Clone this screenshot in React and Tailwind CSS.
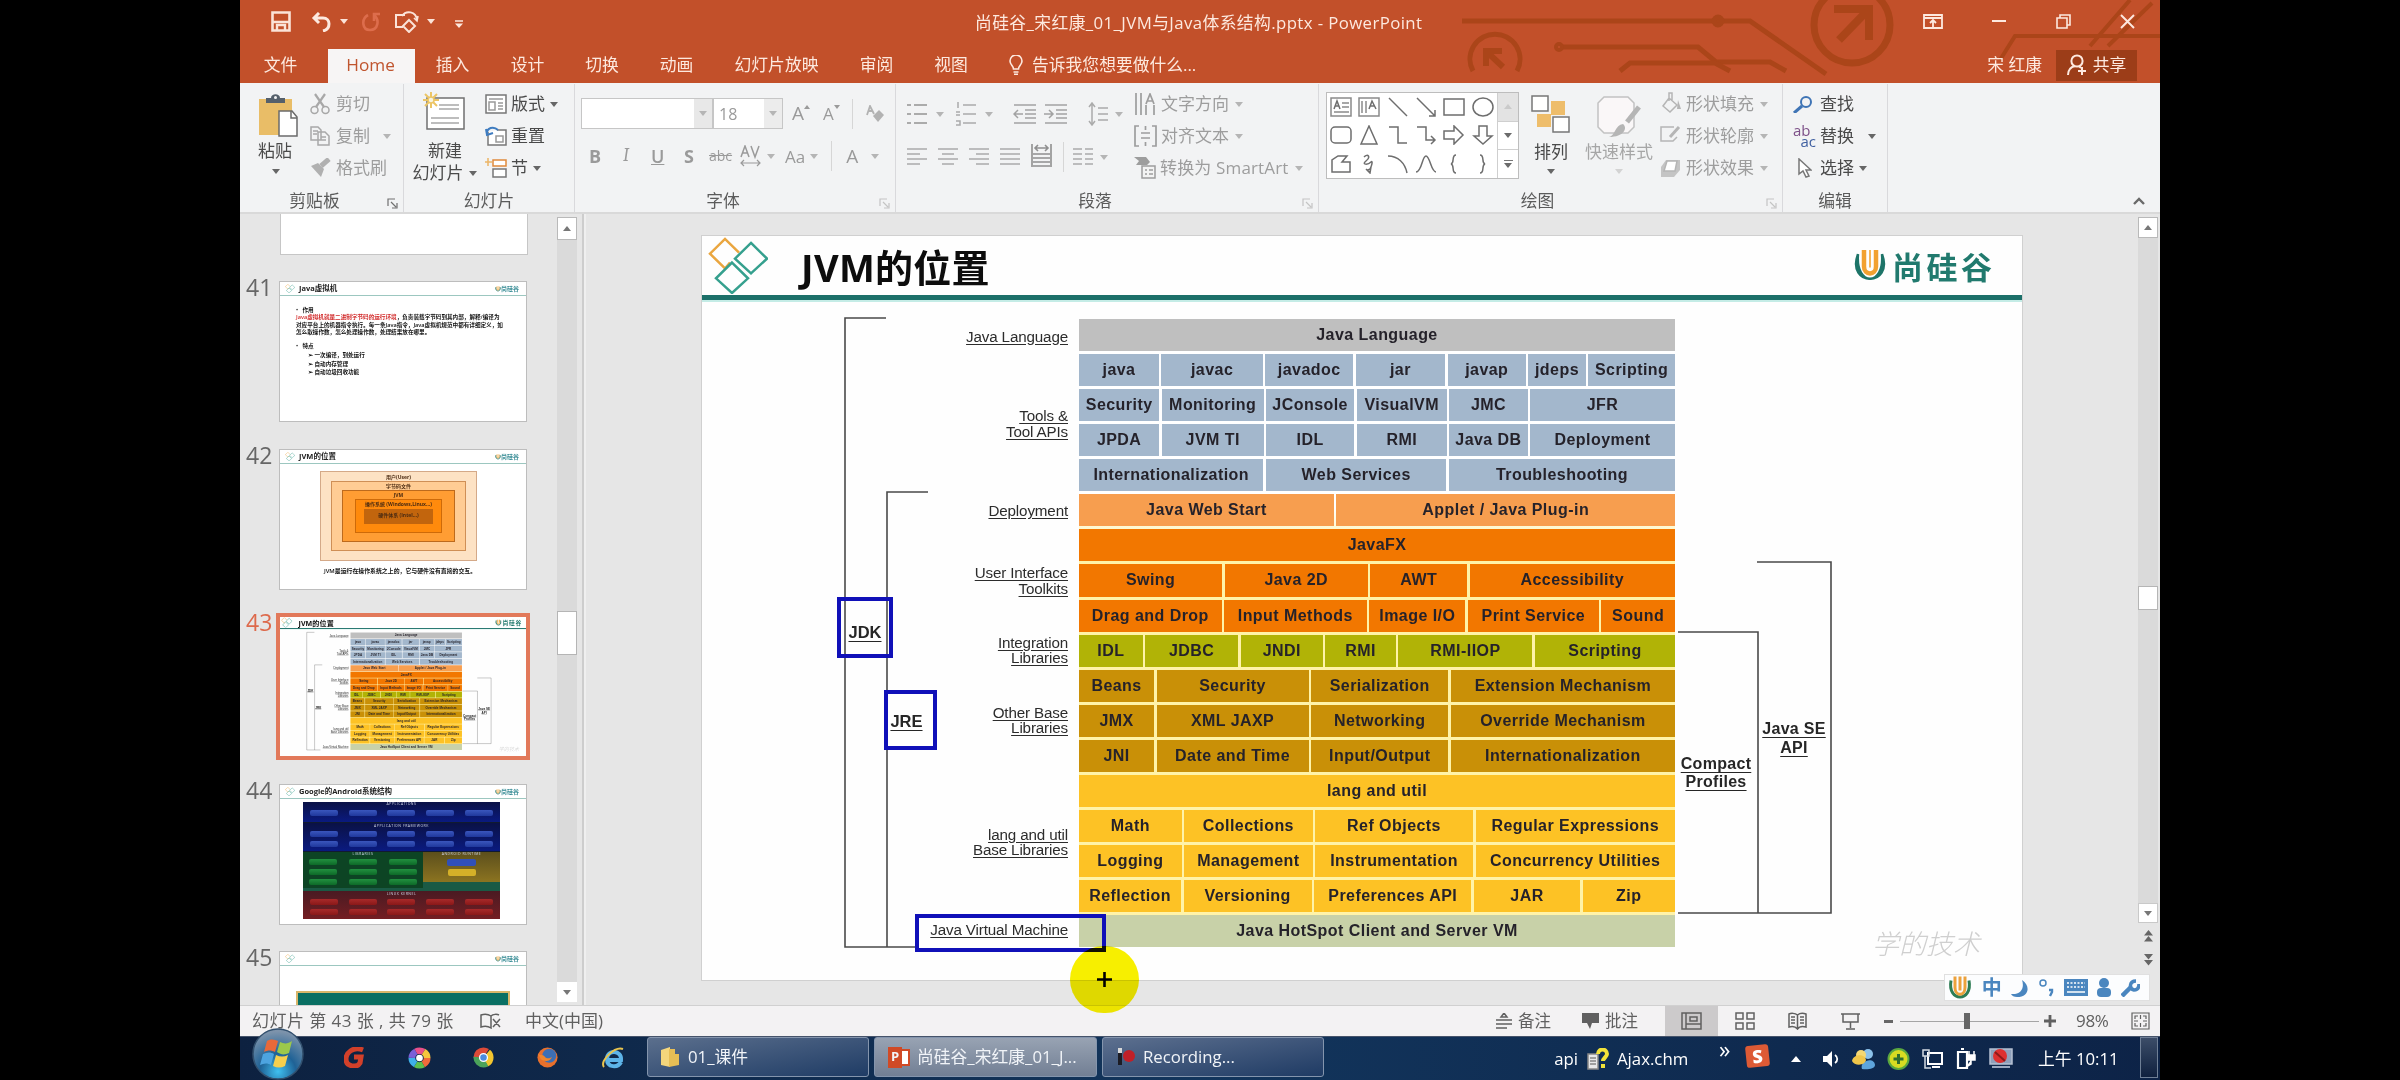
import React from "react";

/* ---------- shared bits ---------- */

function Caret({ className = "text-[#6b6b6b]" }) {
  return (
    <svg viewBox="0 0 8 5" className={"h-[5px] w-[8px] shrink-0 " + className}>
      <path d="M0 0h8L4 5z" fill="currentColor" />
    </svg>
  );
}

function Svg({ w, h, box, className = "", children }) {
  return (
    <svg
      width={w}
      height={h}
      viewBox={box || `0 0 ${w} ${h}`}
      preserveAspectRatio="none"
      fill="none"
      stroke="currentColor"
      strokeWidth="1.5"
      className={"shrink-0 " + className}
    >
      {children}
    </svg>
  );
}

function Launcher({ className = "text-[#777]" }) {
  return (
    <Svg w={11} h={11} className={className}>
      <path d="M1 8V1h7M4 4l5 5M10 5v5H5" strokeWidth="1.2" />
    </Svg>
  );
}

/* ---------- title bar ---------- */

function Circuit() {
  return (
    <svg viewBox="0 0 720 83" className="absolute right-0 top-0 h-[83px] w-[720px]" fill="none" stroke="#ab4519" strokeWidth="5">
      <path d="M22 21H310L386 74" />
      <circle cx="278" cy="21" r="4" />
      <path d="M122 47H258L276 62H330L346 71" />
      <circle cx="119" cy="47" r="3" strokeWidth="4" />
      <path d="M180 71L190 63H275L290 71" />
      <path d="M33 71A25 25 0 1 1 77 71" />
      <path d="M46 66V51H62M47 52L63 67" strokeWidth="6" />
      <circle cx="412" cy="25" r="38" strokeWidth="7" />
      <path d="M394 9H429V40M428 10L399 40" strokeWidth="8" />
      <path d="M560 60L575 36H720M650 46L690 0M668 46L712 3" strokeWidth="4" />
    </svg>
  );
}

function TitleBar() {
  return (
    <div className="relative flex h-[49px] items-start text-[#fde9df]">
      <div className="flex h-[43px] w-[735px] items-center pl-[31px]">
        <Svg w={20} h={21} className="text-[#fbe3d8]">
          <path d="M1.5 1.5h17v18h-17z M2 11h16" strokeWidth="2.6" />
          <path d="M6 20v-6h8v6" strokeWidth="2.4" />
        </Svg>
        <Svg w={21} h={20} className="ml-[20px] text-[#fde9df]">
          <path d="M8 1L3 6l5 5M3 6h9c8 0 8 11 0 13" strokeWidth="3" />
        </Svg>
        <Caret className="ml-[8px] text-[#fbe3d8]" />
        <Svg w={19} h={20} className="ml-[13px] text-[#dd6d4c]">
          <path d="M7 3C0 7 1 18 9 18s10-10 4-15M13 9V2h6" strokeWidth="2.6" />
        </Svg>
        <Svg w={25} h={22} className="ml-[14px] text-[#fbe3d8]">
          <path d="M9 16H2V4h9M8 5c4-6 14-5 15 4M15 9l6 6-6 6-6-6z" strokeWidth="2" />
          <path d="M20 7l3 3 1-5" strokeWidth="1.6" />
        </Svg>
        <Caret className="ml-[8px] text-[#fbe3d8]" />
        <Svg w={8} h={8} className="ml-[20px] mt-[5px] text-[#fde9df]">
          <path d="M0 1h8" />
          <path d="M0 3.5h8L4 8z" fill="currentColor" stroke="none" />
        </Svg>
      </div>
      <div className="whitespace-nowrap pt-[11px] text-[16.8px] leading-6 tracking-[0.4px]">
        尚硅谷_宋红康_01_JVM与Java体系结构.pptx - PowerPoint
      </div>
      <div className="ml-auto flex h-[42px] items-center pr-[25px]">
        <Svg w={20} h={15} className="mr-[49px]">
          <path d="M1 1h18v13H1zM1 4h18M10 13V7M7 9l3-3 3 3" strokeWidth="1.8" />
        </Svg>
        <Svg w={14} h={2} className="mr-[50px]">
          <path d="M0 1h14" strokeWidth="2" />
        </Svg>
        <Svg w={15} h={15} className="mr-[49px]">
          <path d="M1 4h10v10H1zM4 4V1h10v10h-3" strokeWidth="1.6" />
        </Svg>
        <Svg w={15} h={15}>
          <path d="M1 1l13 13M14 1L1 14" strokeWidth="1.9" />
        </Svg>
      </div>
    </div>
  );
}

function TabBar() {
  return (
    <div className="relative flex h-[34px] items-center pb-[2px] text-[16.8px] text-[#fde9df]">
      <div className="w-[88px] pr-[7px] text-center">文件</div>
      <div className="-mb-[2px] flex h-[34px] w-[87px] items-center justify-center bg-[#f7f5f5] pb-[2px] pr-[2px] text-[17.2px] text-[#c0552f]">Home</div>
      <div className="w-[75px] text-center">插入</div>
      <div className="w-[75px] text-center">设计</div>
      <div className="w-[74px] text-center">切换</div>
      <div className="w-[75px] text-center">动画</div>
      <div className="w-[125px] text-center">幻灯片放映</div>
      <div className="w-[75px] text-center">审阅</div>
      <div className="w-[74px] text-center">视图</div>
      <Svg w={14} h={20} className="ml-[21px] mr-[9px]">
        <path d="M4.5 14c0-3-3.5-4-3.5-8a6 6 0 0 1 12 0c0 4-3.5 5-3.5 8zM4.5 17h5M5 19.3h4" strokeWidth="1.6" />
      </Svg>
      <div>告诉我您想要做什么...</div>
      <div className="ml-auto mr-[14px]">宋 红康</div>
      <div className="mr-[23px] flex h-[31px] w-[81px] items-center justify-center gap-[6px] bg-[#9c3d18]">
        <Svg w={20} h={22}>
          <circle cx="10" cy="7" r="5.6" strokeWidth="2" />
          <path d="M1 21c0-5 3-8 7-9M12 12l2 2M15 13v8M11 17h8" strokeWidth="2" />
        </Svg>
        <span>共享</span>
      </div>
    </div>
  );
}

/* ---------- ribbon ---------- */

function Group({ className, label, launcher, children, labelClass = "" }) {
  return (
    <div className={"flex h-[128px] shrink-0 flex-col border-r border-[#d9d9dc] " + className}>
      <div className="flex h-[104px] shrink-0 items-start">{children}</div>
      <div className="flex h-[22px] shrink-0 items-center">
        <div className={"flex-1 text-center text-[16.8px] leading-5 text-[#5b5b5b] " + labelClass}>{label}</div>
        {launcher ? <Launcher className={launcher} /> : null}
      </div>
    </div>
  );
}

function SmallButton({ icon, text, caret, muted, gap = "gap-[5px]", caretGap = "ml-[8px]" }) {
  return (
    <div className={"flex h-8 items-center whitespace-nowrap text-[17px] " + (muted ? "text-[#9d9d9d]" : "text-[#4a4a4a]")}>
      <div className={"flex items-center " + gap}>
        {icon}
        <span>{text}</span>
      </div>
      {caret ? <Caret className={caretGap + (muted ? " text-[#b5b5b5]" : " text-[#666]")} /> : null}
    </div>
  );
}

const LAUNCH_DARK = "mr-[5px] mt-[4px] text-[#707070]";
const LAUNCH_LIGHT = "mr-[5px] mt-[4px] text-[#c4c4c4]";

function ClipboardGroup() {
  return (
    <Group className="w-[164px] pt-[2px]" label="剪贴板" launcher={LAUNCH_DARK} labelClass="pl-[2px]">
      <div className="ml-[17px] mt-[8px] flex w-[42px] flex-col items-center">
        <Svg w={40} h={43}>
          <path d="M1 5h33v36H1z" fill="#e9bd67" stroke="none" />
          <path d="M8 9V4h5c0-5 9-5 9 0h5v5z" fill="#55606b" stroke="none" />
          <circle cx="17.500" cy="3.500" r="1.500" fill="#f3f3f3" stroke="none" />
          <path d="M21 17h13l5 6v19H21z" fill="#fff" stroke="#6b6b6b" />
          <path d="M33 17v7h6" stroke="#6b6b6b" />
        </Svg>
        <div className="mt-[3px] whitespace-nowrap pr-[6px] text-[17px] leading-[22px] text-[#4a4a4a]">粘贴</div>
        <Caret className="mr-[4px] mt-[7px] text-[#666]" />
      </div>
      <div className="ml-[11px] mt-[2px]">
        <SmallButton muted gap="gap-[6px]" text="剪切" icon={
          <Svg w={20} h={22} className="text-[#a8a8a8]">
            <path d="M5 1l9 13M15 1L6 14" strokeWidth="2.2" />
            <circle cx="4.500" cy="17" r="3.500" /><circle cx="15.500" cy="17" r="3.500" />
          </Svg>} />
        <SmallButton muted caret caretGap="ml-[13px]" gap="gap-[6px]" text="复制" icon={
          <Svg w={20} h={20} className="text-[#a8a8a8]">
            <path d="M1 1h7l3 3v10H1zM8 6h7l4 4v9H8zM3 5h5M3 8h4M11 11h5M11 14h5" />
          </Svg>} />
        <SmallButton muted gap="gap-[5px]" text="格式刷" icon={
          <Svg w={21} h={20} className="text-[#b0b0b0]">
            <path d="M1 8l7-3 6 6-3 8z" fill="currentColor" stroke="none" />
            <path d="M11 8l8-7" strokeWidth="5" />
          </Svg>} />
      </div>
    </Group>
  );
}

function SlidesGroup() {
  return (
    <Group className="w-[171px] pt-[2px]" label="幻灯片">
      <div className="ml-[9px] mt-[6px] flex w-[58px] flex-col items-center">
        <Svg w={43} h={38} className="mr-[-4px]">
          <path d="M4 6h37v31H4z" fill="#fff" stroke="#707070" />
          <path d="M16 13h20M16 17h20M8 26h28M8 31h28" stroke="#a8a8a8" />
          <path d="M8 0v16M0 8h16M2 2l12 12M14 2L2 14" stroke="#ecc565" strokeWidth="2" />
          <circle cx="8" cy="8" r="3" fill="#f7f3e0" stroke="#ecc565" />
        </Svg>
        <div className="mt-[10px] pl-[6px] text-[17px] leading-[22px] text-[#4a4a4a]">新建</div>
        <div className="ml-[5px] flex items-center gap-[5px] whitespace-nowrap text-[17px] leading-[22px] text-[#4a4a4a]">
          幻灯片 <Caret className="text-[#666]" />
        </div>
      </div>
      <div className="ml-[14px] mt-[2px]">
        <SmallButton text="版式" caret gap="gap-[4px]" caretGap="ml-[5px]" icon={
          <Svg w={22} h={20} className="text-[#777]">
            <path d="M1 1h20v18H1z" fill="#fff" />
            <path d="M4 5h14M4 8h6v8H4zM13 9h5M13 12h5M13 15h5" stroke="#999" />
          </Svg>} />
        <SmallButton text="重置" gap="gap-[4px]" icon={
          <Svg w={22} h={20} className="text-[#777]">
            <path d="M3 6v13h18V4H12" fill="#fff" />
            <path d="M11 10h7v6h-7z" stroke="#999" />
            <path d="M2 9C1 1 9 0 13 4M1 3l1 6 6-2" stroke="#3f7cc0" strokeWidth="2" />
          </Svg>} />
        <SmallButton text="节" caret gap="gap-[4px]" caretGap="ml-[5px]" icon={
          <Svg w={22} h={20} className="text-[#777]">
            <path d="M8 2h13v6H8z" stroke="#e08a3c" fill="#fff" />
            <path d="M8 11h13v8H8z" fill="#fff" />
            <path d="M3 0v8M0 4h7" stroke="#ecb565" />
          </Svg>} />
      </div>
    </Group>
  );
}

function FontGroup() {
  return (
    <Group className="w-[321px] pt-[2px]" label="字体" launcher={LAUNCH_LIGHT} labelClass="pr-[8px]">
      <div className="ml-[6px] mt-[12px] text-[#9a9a9a]">
        <div className="flex h-[31px] items-center">
          <div className="flex h-[31px] w-[132px] border border-[#c6c6c6] bg-white">
            <div className="ml-auto flex w-[18px] items-center justify-center bg-[#e8e8e8]"><Caret className="text-[#b5b5b5]" /></div>
          </div>
          <div className="flex h-[31px] w-[70px] items-center border border-[#c6c6c6] bg-white pl-[5px] text-[16px]">
            18
            <div className="ml-auto flex h-full w-[18px] items-center justify-center bg-[#ececec]"><Caret className="text-[#b5b5b5]" /></div>
          </div>
          <div className="ml-[9px] flex items-start text-[19px] leading-none">A<Svg w={6} h={4} className="mt-[1px]"><path d="M0 4h6L3 0z" fill="currentColor" stroke="none" /></Svg></div>
          <div className="ml-[13px] flex items-start text-[17px] leading-none">A<Svg w={6} h={4}><path d="M0 0h6L3 4z" fill="currentColor" stroke="none" /></Svg></div>
          <div className="ml-[12px] h-[30px] w-px bg-[#d6d6d6]" />
          <Svg w={18} h={18} className="ml-[13px] text-[#b2b2b2]">
            <path d="M7 11l6-6 5 5-6 7z" fill="currentColor" stroke="none" />
            <path d="M1 10L4 1l4 8M2 6h5" strokeWidth="1.8" />
          </Svg>
        </div>
        <div className="mt-[12px] flex h-[30px] items-center pl-[8px] text-[18px] leading-none">
          <b className="w-[32px]">B</b>
          <i className="w-[30px] pl-[2px] font-serif">I</i>
          <span className="w-[33px] font-semibold underline">U</span>
          <b className="w-[25px]">S</b>
          <span className="w-[31px] text-[14px] line-through">abc</span>
          <Svg w={21} h={22}>
            <path d="M1 12L5 1l4 11M3 8h5M11 1l4 11 4-11" />
            <path d="M1 18h19M4 15l-3 3 3 3M17 15l3 3-3 3" strokeWidth="1.200" />
          </Svg>
          <Caret className="ml-[6px] text-[#b5b5b5]" />
          <span className="ml-[10px] text-[17px]">Aa</span>
          <Caret className="ml-[5px] text-[#b5b5b5]" />
          <div className="ml-[13px] h-[30px] w-px bg-[#d6d6d6]" />
          <span className="ml-[14px] text-[19px]">A</span>
          <Caret className="ml-[13px] text-[#b5b5b5]" />
        </div>
      </div>
    </Group>
  );
}

function Lines({ d, w = 20 }) {
  return (
    <Svg w={w} h={18} className="text-[#ababab]">
      <path d={d} strokeWidth="1.600" />
    </Svg>
  );
}

function ParagraphGroup() {
  return (
    <Group className="w-[423px] pt-[2px]" label="段落" launcher={LAUNCH_LIGHT} labelClass="pr-[8px]">
      <div className="mt-[12px] w-[227px] pl-[11px]">
        <div className="flex h-[32px] items-center">
          <Svg w={20} h={24} className="text-[#ababab]"><path d="M0 3h4M0 12h4M0 21h4M7 3h13M7 12h13M7 21h13" strokeWidth="2" /></Svg>
          <Caret className="ml-[9px] text-[#b5b5b5]" />
          <Svg w={20} h={24} className="ml-[12px] text-[#ababab]"><path d="M2 0v6M0 10h4M0 13h4M0 19h4v4H0M7 3h13M7 12h13M7 21h13" /></Svg>
          <Caret className="ml-[9px] text-[#b5b5b5]" />
          <div className="ml-[9px] h-[30px] w-px bg-[#d6d6d6]" />
          <Svg w={23} h={20} className="ml-[11px] text-[#a2a2a2]"><path d="M1 1h22M12 6h11M12 10h11M12 14h11M1 19h22M10 10H1M5 6l-4 4 4 4" /></Svg>
          <Svg w={23} h={20} className="ml-[8px] text-[#a2a2a2]"><path d="M1 1h22M12 6h11M12 10h11M12 14h11M1 19h22M0 10h9M5 6l4 4-4 4" /></Svg>
          <div className="ml-[9px] h-[30px] w-px bg-[#d6d6d6]" />
          <Svg w={20} h={24} className="ml-[12px] text-[#ababab]"><path d="M4 1v22M1 5l3-4 3 4M1 19l3 4 3-4M10 6h10M10 12h10M10 18h10" /></Svg>
          <Caret className="ml-[7px] text-[#b5b5b5]" />
        </div>
        <div className="mt-[12px] flex h-[30px] items-center gap-[11px]">
          <Lines d="M0 1h20M0 6h13M0 11h20M0 16h13" />
          <Lines d="M0 1h20M4 6h12M0 11h20M4 16h12" />
          <Lines d="M0 1h20M7 6h13M0 11h20M7 16h13" />
          <Lines d="M0 1h20M0 6h20M0 11h20M0 16h20" />
          <Svg w={21} h={23} className="mb-[3px] text-[#8f8f8f]"><path d="M1 0v23M20 0v23M4 4h13M7 1L4 4l3 3M14 1l3 3-3 3M2 10h17M2 14h17M2 18h17M2 22h17" strokeWidth="1.600" /></Svg>
          <div className="-mr-[2px] h-[30px] w-px bg-[#d6d6d6]" />
          <Lines d="M0 1h9M0 6h9M0 11h9M0 16h9M12 1h8M12 6h8M12 11h8M12 16h8" />
          <Caret className="-ml-[4px] text-[#b5b5b5]" />
        </div>
      </div>
      <div className="ml-[11px] mt-[2px]">
        <SmallButton muted caret gap="gap-[4px]" caretGap="ml-[6px]" text="文字方向" icon={<Svg w={23} h={22}><path d="M2 0v22M7 0v22M12 12v10M20 12v10M12 11l4-10 4 10M13 8h6" strokeWidth="1.700" /></Svg>} />
        <SmallButton muted caret gap="gap-[4px]" caretGap="ml-[6px]" text="对齐文本" icon={<Svg w={23} h={22}><path d="M5 1H1v20h4M18 1h4v20h-4M7 8h9M7 13h9M11.500 1v4M11.500 17v4" strokeWidth="1.700" /></Svg>} />
        <SmallButton muted caret gap="gap-[3px]" caretGap="ml-[6px]" text={<span className="tracking-[0.15px]">转换为 SmartArt</span>} icon={<Svg w={23} h={22}><path d="M0 0h12l4 5-3 3H2l3-4z" fill="currentColor" stroke="none" /><path d="M8 9h13v12H8zM11 13h2M15 13h4M11 17h2M15 17h4" fill="#f3f3f3" /></Svg>} />
      </div>
    </Group>
  );
}

const SHAPES = [
  <g key="a"><path d="M1 1h20v18H1zM12 6h7M12 10h7M4 15h15" stroke="#8a8a8a" /><path d="M4 12l3-8 3 8M5 9h4" /></g>,
  <g key="b"><path d="M1 1h20v18H1zM4 4v12M8 4v12" stroke="#8a8a8a" /><path d="M11 12l3-8 4 8M12 9h5" /></g>,
  <path key="c" d="M2 1l18 18" />,
  <path key="d" d="M2 1l18 18M20 13v6h-6" />,
  <path key="e" d="M1 2h20v16H1z" />,
  <ellipse key="f" cx="11" cy="10" rx="10" ry="9" />,
  <rect key="g" x="1" y="2" width="20" height="16" rx="4" />,
  <path key="h" d="M11 1l8 18H3z" />,
  <path key="i" d="M2 2h9v16h9" />,
  <path key="j" d="M2 2h9v13h9M16 11l4 4-4 4" />,
  <path key="k" d="M1 6h10V1l9 9-9 9v-5H1z" />,
  <path key="l" d="M7 1h8v10h5l-9 8-9-8h5z" />,
  <path key="m" d="M2 18V6l6-4h9l-5 6h8v10z" />,
  <path key="n" d="M6 3c4-4 7 0 2 4s2 4 5 1-1 11-3 7M8 15l4 4 1-6" />,
  <path key="o" d="M1 2c10 0 17 7 19 17" />,
  <path key="p" d="M1 18C7 18 7 2 11 2s5 16 10 16" />,
  <path key="q" d="M13 1c-5 0-1 8-5 9 4 1 0 9 5 9" />,
  <path key="r" d="M8 1c5 0 1 8 5 9-4 1 0 9-5 9" />,
];

function DrawingGroup() {
  return (
    <Group className="w-[464px] pt-[2px]" label="绘图" launcher={LAUNCH_LIGHT} labelClass="pr-[10px]">
      <div className="ml-[7px] mt-[6px] flex h-[87px] w-[193px] border border-[#bdbdbd] bg-white">
        <div className="grid w-[170px] grid-cols-6 grid-rows-3 place-items-center">
          {SHAPES.map((s, i) => (
            <Svg key={i} w={22} h={20} className="text-[#6e6e6e]">{s}</Svg>
          ))}
        </div>
        <div className="flex flex-1 flex-col border-l border-[#cfcfcf]">
          <div className="flex flex-1 items-center justify-center bg-[#e3e3e3]"><Caret className="rotate-180 text-[#cacaca]" /></div>
          <div className="flex flex-1 items-center justify-center border-y border-[#cfcfcf]"><Caret /></div>
          <div className="flex flex-1 flex-col items-center justify-center gap-[2px]"><div className="h-[1.500px] w-[9px] bg-[#777]" /><Caret /></div>
        </div>
      </div>
      <div className="ml-[9px] mt-[9px] flex w-[46px] flex-col items-center">
        <Svg w={40} h={38}>
          <path d="M20 6h14v14H20zM6 19h14v13H6z" fill="#eebd6b" stroke="none" />
          <path d="M1 1h16v15H1zM22 22h16v15H22z" fill="#fff" stroke="#777" />
        </Svg>
        <div className="mt-[8px] text-[17px] leading-[22px] text-[#4a4a4a]">排列</div>
        <Caret className="mt-[6px] text-[#666]" />
      </div>
      <div className="ml-[1px] mt-[10px] flex w-[88px] flex-col items-center">
        <Svg w={44} h={42} className="text-[#c2c2c2]">
          <path d="M7 1h24l6 6v24l-6 6H7l-6-6V7z" fill="#faf7f8" />
          <path d="M42 11L30 26" strokeWidth="5" stroke="#b5b5b5" />
          <path d="M12 41c6-1 6-12 14-13 5 4 1 13-14 13z" fill="#b5b5b5" stroke="none" />
        </Svg>
        <div className="mt-[3px] whitespace-nowrap text-[17px] leading-[22px] text-[#a6a6a6]">快速样式</div>
        <Caret className="mt-[6px] text-[#d3d3d3]" />
      </div>
      <div className="-ml-[3px] mt-[2px]">
        <SmallButton muted caret gap="gap-[4px]" caretGap="ml-[6px]" text="形状填充" icon={<Svg w={22} h={21} className="mb-[4px] text-[#b5b5b5]"><path d="M9 6l8 7-7 7-7-6zM9 9V1h3v7" /><path d="M18 8l3 9h-4z" fill="currentColor" stroke="none" /></Svg>} />
        <SmallButton muted caret gap="gap-[4px]" caretGap="ml-[6px]" text="形状轮廓" icon={<Svg w={22} h={18} className="mb-[6px] text-[#b5b5b5]"><path d="M14 3H1v14h12l4-4" /><path d="M19 3l-9 10" strokeWidth="3" /></Svg>} />
        <SmallButton muted caret gap="gap-[4px]" caretGap="ml-[6px]" text="形状效果" icon={<Svg w={22} h={19} className="text-[#b5b5b5]"><path d="M6 1h14v10l-6 7H1V8z" fill="#c4c4c4" stroke="none" /><path d="M7 2h10l-2 10H4z" fill="#fff" /></Svg>} />
      </div>
    </Group>
  );
}

function EditGroup() {
  return (
    <Group className="w-[105px] pt-[2px]" label="编辑">
      <div className="ml-[10px] mt-[2px]">
        <SmallButton gap="gap-[7px]" text="查找" icon={<Svg w={20} h={17} className="text-[#3f74b5]"><circle cx="13" cy="6" r="5" strokeWidth="2" /><path d="M9 10l-8 7" strokeWidth="3" /></Svg>} />
        <SmallButton gap="gap-[4px]" caret caretGap="ml-[14px]" text="替换" icon={
          <div className="flex w-[23px] flex-col text-[15px] leading-[11px]"><span className="h-[11px] text-[#7d5088]">ab</span><span className="h-[11px] text-right text-[#3f5fa0]">ac</span></div>} />
        <SmallButton gap="gap-[8px]" caret caretGap="ml-[5px]" text="选择" icon={<Svg w={14} h={20} className="ml-[5px] text-[#777]"><path d="M1 1v15l4-3 3 6 3-1-3-6h5z" fill="#fff" /></Svg>} />
      </div>
    </Group>
  );
}

function Ribbon() {
  return (
    <div className="relative flex h-[131px] border-b-[2px] border-[#d9d9d9] bg-[#f2f3f4] pt-[1px]">
      <ClipboardGroup />
      <SlidesGroup />
      <FontGroup />
      <ParagraphGroup />
      <DrawingGroup />
      <EditGroup />
      <Svg w={12} h={8} className="mb-[7px] ml-auto mr-[15px] self-end text-[#6a6a6a]">
        <path d="M1 7l5-5 5 5" strokeWidth="2.4" />
      </Svg>
    </div>
  );
}

/* ---------- slide content ---------- */

const BLUE = "bg-[#a3b7cc]";
const ORANGE = "bg-[#f27700]";
const OLIVE = "bg-[#b1b306]";
const BROWN = "bg-[#c99007]";
const GOLD = "bg-[#fdc225]";

/* each row: fill colour, then [label, right edge] pairs measured in slide units */
const ROWS = [
  ["bg-[#bfbfbf]", [["Java Language", 596]]],
  [BLUE, [["java", 82], ["javac", 186], ["javadoc", 276], ["jar", 368], ["javap", 448], ["jdeps", 507], ["Scripting", 596]]],
  [BLUE, [["Security", 82], ["Monitoring", 186], ["JConsole", 276], ["VisualVM", 368], ["JMC", 448], ["JFR", 596]]],
  [BLUE, [["JPDA", 82], ["JVM TI", 186], ["IDL", 276], ["RMI", 368], ["Java DB", 448], ["Deployment", 596]]],
  [BLUE, [["Internationalization", 186], ["Web Services", 368], ["Troubleshooting", 596]]],
  ["bg-[#f79e4f]", [["Java Web Start", 256], ["Applet / Java Plug-in", 596]]],
  [ORANGE, [["JavaFX", 596]]],
  [ORANGE, [["Swing", 145], ["Java 2D", 290], ["AWT", 388], ["Accessibility", 596]]],
  [ORANGE, [["Drag and Drop", 145], ["Input Methods", 290], ["Image I/O", 388], ["Print Service", 521], ["Sound", 596]]],
  [OLIVE, [["IDL", 65], ["JDBC", 160], ["JNDI", 244], ["RMI", 316], ["RMI-IIOP", 453], ["Scripting", 596]]],
  [BROWN, [["Beans", 76], ["Security", 230], ["Serialization", 369], ["Extension Mechanism", 596]]],
  [BROWN, [["JMX", 76], ["XML JAXP", 230], ["Networking", 369], ["Override Mechanism", 596]]],
  [BROWN, [["JNI", 76], ["Date and Time", 230], ["Input/Output", 369], ["Internationalization", 596]]],
  [GOLD, [["lang and util", 596]]],
  [GOLD, [["Math", 104], ["Collections", 234], ["Ref Objects", 394], ["Regular Expressions", 596]]],
  [GOLD, [["Logging", 104], ["Management", 234], ["Instrumentation", 394], ["Concurrency Utilities", 596]]],
  [GOLD, [["Reflection", 104], ["Versioning", 234], ["Preferences API", 394], ["JAR", 502], ["Zip", 596]]],
  ["bg-[#c8d1a8]", [["Java HotSpot Client and Server VM", 596]]],
];

function Diagram() {
  return (
    <div className="flex h-[628px] w-[596px] flex-col gap-[3px] bg-gradient-to-b from-white from-[30%] to-[#fff3a8] to-[36%] font-['Liberation_Sans',Arial,sans-serif]">
      {ROWS.map(([fill, cells], r) => (
        <div key={r} className="flex flex-1 gap-[2.500px]">
          {cells.map(([label, edge], i) => (
            <div
              key={i}
              style={{ flexGrow: edge - (i ? cells[i - 1][1] : 0), flexBasis: 0 }}
              className={"flex min-w-0 items-center justify-center whitespace-nowrap text-[16px] font-bold tracking-[0.45px] text-[#25222a] " + fill}
            >
              {label}
            </div>
          ))}
        </div>
      ))}
    </div>
  );
}

function RowLabels() {
  const cell = "flex flex-col items-end justify-center text-right leading-[15.5px] underline underline-offset-[2px]";
  return (
    <div className="grid h-[628px] w-[151px] grid-rows-18 font-['Liberation_Sans',Arial,sans-serif] text-[15.2px] tracking-[-0.15px] text-[#2c2c2c]">
      <div className={cell}>Java Language</div>
      <div className={"row-span-4 " + cell}><span>Tools &amp;</span><span>Tool APIs</span></div>
      <div className={cell}>Deployment</div>
      <div className={"row-span-3 " + cell}><span>User Interface</span><span>Toolkits</span></div>
      <div className={cell}><span>Integration</span><span>Libraries</span></div>
      <div className={"row-span-3 " + cell}><span>Other Base</span><span>Libraries</span></div>
      <div className={"row-span-4 " + cell}><span>lang and util</span><span>Base Libraries</span></div>
      <div className={cell}>Java Virtual Machine</div>
    </div>
  );
}

function Diamonds({ className = "" }) {
  return (
    <svg viewBox="0 0 60 58" preserveAspectRatio="none" fill="none" strokeWidth="2.500" className={className}>
      <path d="M31 16L17 2 2 17l15 15 5-6" stroke="#eaa63f" />
      <path d="M43 6l16 16-16 15-16-15z" stroke="#35a08e" />
      <path d="M24 26l16 16-16 15L8 42z" stroke="#35a08e" />
    </svg>
  );
}

function ULogo({ className = "" }) {
  return (
    <svg viewBox="0 0 36 36" preserveAspectRatio="none" fill="none" className={className}>
      <path d="M6 6C-6 38 42 38 30 6c3 32-27 32-24 0z" fill="#1d7468" stroke="#1d7468" strokeWidth="2.500" />
      <path d="M12 2v16c0 9 12 9 12 0V2" stroke="#f2a130" strokeWidth="4.500" />
      <path d="M18 2v17" stroke="#f6b75a" strokeWidth="2" />
    </svg>
  );
}

function SlideHeader({ title }) {
  return (
    <div className="flex h-[64px] w-[1320px] items-start border-b-[5px] border-[#1c7069] shadow-[0_2px_0_#c4ece6]">
      <Diamonds className="ml-[6px] mt-[1px] h-[57px] w-[60px]" />
      <div className="ml-[33px] mt-[8px] whitespace-nowrap text-[38px] font-bold leading-[46px] tracking-[0.3px] text-[#0d0d0d]">{title}</div>
      <div className="ml-auto mr-[26px] mt-[12px] flex items-center gap-[4px]">
        <ULogo className="h-[37px] w-[36px]" />
        <span className="w-[104px] whitespace-nowrap text-[31px] font-bold leading-[34px] tracking-[3.5px] text-[#217a6e]">尚硅谷</span>
      </div>
    </div>
  );
}

function Brackets() {
  return (
    <svg viewBox="0 0 1320 744" className="absolute left-0 top-0 h-[744px] w-[1320px]" fill="none" stroke="#4a4a4a" strokeWidth="1.600">
      <path d="M184 82H143V711H216" />
      <path d="M226 256H185V711" />
      <path d="M976 396H1056V677" />
      <path d="M1055 326H1129V677H976" />
    </svg>
  );
}

function Slide({ annotated }) {
  const tag = "absolute flex flex-col items-center text-center whitespace-nowrap font-['Liberation_Sans',Arial,sans-serif] font-bold text-[#262626] underline underline-offset-[3px] ";
  return (
    <div className="relative h-[744px] w-[1320px] bg-[#fefefe]">
      <SlideHeader title="JVM的位置" />
      <Brackets />
      <div className="ml-[215px] mt-[19px] flex gap-[11px]">
        <RowLabels />
        <Diagram />
      </div>
      <div className={tag + "left-[135px] top-[360px] h-[61px] w-[56px] justify-center pt-[11px] text-[16.500px]"}>JDK</div>
      <div className={tag + "left-[181px] top-[454px] h-[60px] w-[47px] justify-center pt-[2px] text-[16.500px]"}>JRE</div>
      <div className={tag + "left-[975px] top-[519px] w-[78px] text-[16px] leading-[18px] tracking-[0.3px]"}><span>Compact</span><span>Profiles</span></div>
      <div className={tag + "left-[1057px] top-[483px] w-[70px] text-[16px] leading-[19px] tracking-[0.3px]"}><span>Java SE</span><span>API</span></div>
      {annotated ? (
        <>
          <div className="absolute left-[135px] top-[361px] h-[61px] w-[56px] border-[4px] border-[#1010b8]" />
          <div className="absolute left-[182px] top-[454px] h-[60px] w-[53px] border-[4px] border-[#1010b8]" />
          <div className="absolute left-[213px] top-[678px] h-[38px] w-[191px] border-[4px] border-[#1010b8]" />
        </>
      ) : null}
      <div className="absolute left-[1170px] top-[690px] whitespace-nowrap text-[27px] font-light italic leading-[36px] text-[#cfcfcf]">学的技术</div>
    </div>
  );
}

/* ---------- thumbnails ---------- */

function ThumbHeader({ title }) {
  return (
    <div className="flex h-[14px] items-center border-b border-[#9cc7c0] px-[5px]">
      <Diamonds className="h-[9px] w-[10px]" />
      <div className="ml-[4px] whitespace-nowrap text-[7.500px] font-bold leading-none text-[#222]">{title}</div>
      <ULogo className="ml-auto h-[6px] w-[6px]" />
      <div className="mr-[2px] text-[6px] font-bold leading-none text-[#3c8f98]">尚硅谷</div>
    </div>
  );
}

function Thumb({ n, active, className = "", children }) {
  return (
    <div className={"flex items-start " + className}>
      <div className={"-mt-[6px] w-[39px] pl-[6px] text-[23px] leading-[24px] " + (active ? "text-[#dd6a4c]" : "text-[#666]")}>{n}</div>
      <div className={"h-[141px] w-[248px] overflow-hidden border bg-white " + (active ? "border-[#e2795a] outline outline-[3px] outline-[#e2795a]" : "border-[#bdbdbd]")}>
        {children}
      </div>
    </div>
  );
}

function JavaVmThumb() {
  return (
    <>
      <ThumbHeader title="Java虚拟机" />
      <div className="pl-[16px] pt-[11px] text-[5.600px] font-semibold leading-[7.300px] text-[#111]">
        <div>• &nbsp; 作用</div>
        <div className="w-[208px]">
          <span className="text-[#d22a2a]">Java虚拟机就是二进制字节码的运行环境</span>，负责装载字节码到其内部，解释/编译为对应平台上的机器指令执行。每一条Java指令，Java虚拟机规范中都有详细定义，如怎么取操作数，怎么处理操作数，处理结果放在哪里。
        </div>
        <div className="mt-[7px]">• &nbsp; 特点</div>
        <div className="pl-[12px] pt-[1px] leading-[8.200px]">
          <div>➢ 一次编译，到处运行</div>
          <div>➢ 自动内存管理</div>
          <div>➢ 自动垃圾回收功能</div>
        </div>
      </div>
    </>
  );
}

function NestedThumb() {
  return (
    <>
      <ThumbHeader title="JVM的位置" />
      <div className="ml-[40px] mt-[7px] h-[90px] w-[157px] border border-[#d4a988] bg-[#fde2c4] px-[10px] pt-[2px] text-center text-[5px] font-bold leading-[7px] text-[#4b2b12]">
        用户(User)
        <div className="h-[70px] border border-[#cf8f56] bg-[#ffcc94] px-[10px] pt-[1px]">
          字节码文件
          <div className="h-[52px] border border-[#bd6a1c] bg-[#ff9d33] px-[12px] pt-[1px]">
            JVM
            <div className="h-[34px] border border-[#ce6a08] bg-[#ff8a0c] px-[8px] pt-[1px]">
              操作系统 (Windows,Linux…)
              <div className="mt-[1px] h-[15px] bg-[#c2650d] pt-[3px]">硬件体系 (Intel…)</div>
            </div>
          </div>
        </div>
      </div>
      <div className="mt-[6px] pr-[6px] text-center text-[5.900px] font-semibold leading-[8px] text-[#111]">
        JVM是运行在操作系统之上的，它与硬件没有直接的交互。
      </div>
    </>
  );
}

function Pills({ count, fill, className = "" }) {
  return (
    <div className={"flex justify-around " + className}>
      {Array.from({ length: count }, (_, i) => (
        <div key={i} className={"h-[6px] w-[28px] rounded-[2px] bg-gradient-to-b " + fill} />
      ))}
    </div>
  );
}

const PILL_BLUE = "from-[#3a56bd] to-[#20389c]";
const PILL_GREEN = "from-[#229040] to-[#0d6a28]";
const PILL_RED = "from-[#a82a2a] to-[#8a1818]";

function AndroidThumb() {
  const head = "text-center text-[3.500px] leading-[4px] tracking-[0.500px] text-[#cdd3e6]";
  return (
    <>
      <ThumbHeader title="Google的Android系统结构" />
      <div className="ml-[23px] mt-[3px] h-[117px] w-[197px] bg-[#111b30]">
        <div className="h-[20px] bg-gradient-to-b from-[#0a1146] to-[#0a1a80] px-[2px]">
          <div className={head}>APPLICATIONS</div>
          <Pills count={5} fill={PILL_BLUE} className="mt-[4px]" />
        </div>
        <div className="mt-[1px] h-[28px] bg-gradient-to-b from-[#0a1146] to-[#0a1a80] px-[2px] pt-[1px]">
          <div className={head}>APPLICATION FRAMEWORK</div>
          <Pills count={5} fill={PILL_BLUE} className="mt-[3px]" />
          <Pills count={5} fill={PILL_BLUE} className="mt-[4px]" />
        </div>
        <div className="mt-[1px] flex h-[39px] bg-[#1a5a45]">
          <div className="h-[36px] w-[120px] bg-[#0d4424]">
            <div className={head}>LIBRARIES</div>
            <Pills count={3} fill={PILL_GREEN} className="mt-[3px]" />
            <Pills count={3} fill={PILL_GREEN} className="mt-[4px]" />
            <Pills count={3} fill={PILL_GREEN} className="mt-[4px]" />
          </div>
          <div className="flex h-[30px] flex-1 flex-col items-center bg-gradient-to-b from-[#5c4f1c] to-[#8c7420]">
            <div className={head}>ANDROID RUNTIME</div>
            <div className="mt-[3px] h-[7px] w-[29px] rounded-[2px] bg-[#3150b8]" />
            <div className="mt-[3px] h-[7px] w-[28px] rounded-[2px] bg-[#d5b028]" />
          </div>
        </div>
        <div className="h-[28px] bg-gradient-to-b from-[#4a1a22] to-[#741d22] px-[2px] pt-[1px]">
          <div className={head}>LINUX KERNEL</div>
          <Pills count={5} fill={PILL_RED} className="mt-[3px]" />
          <Pills count={5} fill={PILL_RED} className="mt-[4px]" />
        </div>
      </div>
    </>
  );
}

function ThumbPane() {
  return (
    <div className="flex h-[791px] w-[344px] shrink-0 border-r-2 border-[#cdcdcd]">
      <div className="h-full w-[317px] overflow-hidden">
        <div className="ml-[40px] h-[41px] w-[248px] border border-t-0 border-[#c6c6c6] bg-white" />
        <Thumb n="41" className="mt-[26px]"><JavaVmThumb /></Thumb>
        <Thumb n="42" className="mt-[27px]"><NestedThumb /></Thumb>
        <Thumb n="43" active className="mt-[26px]">
          <div className="h-[744px] w-[1320px] origin-top-left scale-[0.187]"><Slide /></div>
        </Thumb>
        <Thumb n="44" className="mt-[27px]"><AndroidThumb /></Thumb>
        <Thumb n="45" className="mt-[26px]">
          <ThumbHeader title="" />
          <div className="mx-[16px] mt-[25px] h-[80px] border-2 border-[#d9b66a] bg-[#0a6f63]" />
        </Thumb>
      </div>
      <div className="mt-[3px] flex h-[785px] w-[20px] flex-col bg-[#dadada]">
        <div className="flex h-[23px] items-center justify-center border border-[#b9b9b9] bg-white"><Caret className="rotate-180 text-[#777]" /></div>
        <div className="mt-[371px] h-[44px] border border-[#b5b5b5] bg-white" />
        <div className="mt-auto flex h-[20px] items-center justify-center bg-white"><Caret className="text-[#777]" /></div>
      </div>
    </div>
  );
}

/* ---------- editor ---------- */

function ImeBar() {
  return (
    <div className="absolute right-[10px] top-[760px] flex h-[27px] w-[206px] items-center justify-between border border-[#e0e0e0] bg-[#fcfdfe] pl-[3px] pr-[9px] text-[#4a86bf]">
      <svg viewBox="0 0 24 24" className="h-[25px] w-[24px]" fill="none">
        <path d="M3 5c-4 22 22 22 18 0" stroke="#2f7d55" strokeWidth="3" />
        <path d="M7 1v11c0 9 10 9 10 0V1M12 1v14" stroke="#eca23c" strokeWidth="3" />
      </svg>
      <span className="text-[20px] font-bold leading-none">中</span>
      <Svg w={18} h={18}><path d="M11 1c9 6 7 17-5 17-3 0-5-1-6-3 9 1 14-5 11-14z" fill="currentColor" stroke="none" /></Svg>
      <Svg w={15} h={18}><circle cx="4" cy="4" r="3" /><path d="M10 11h3v2l-2 4" strokeWidth="2.400" /></Svg>
      <Svg w={24} h={17}>
        <path d="M0 0h24v17H0z" fill="currentColor" stroke="none" />
        <path d="M3 4h18M3 8h18" stroke="#fff" strokeDasharray="2 1.500" />
        <path d="M3 13h18" stroke="#fff" />
      </Svg>
      <Svg w={14} h={19}><circle cx="7" cy="5" r="5" fill="currentColor" stroke="none" /><rect y="10" width="14" height="9" rx="4" fill="currentColor" stroke="none" /></Svg>
      <Svg w={19} h={18}><path d="M1 17l9-9" strokeWidth="4.500" /><path d="M15 2c-7 0-7 8-2 9 4 0 5-3 5-6" strokeWidth="3.500" /></Svg>
    </div>
  );
}

function Editor() {
  return (
    <div className="relative flex min-w-0 flex-1 border-l-2 border-[#efefef]">
      <div className="ml-[115px] mt-[21px] h-[746px] w-[1322px] shrink-0 border border-[#d0d0d0]">
        <Slide annotated />
      </div>
      <div className="ml-auto mr-[2px] mt-[3px] flex w-[20px] flex-col items-center">
        <div className="flex h-[706px] w-full flex-col bg-[#dadada]">
          <div className="flex h-[21px] items-center justify-center border border-[#b9b9b9] bg-white"><Caret className="rotate-180 text-[#777]" /></div>
          <div className="mt-[348px] h-[24px] border border-[#b5b5b5] bg-white" />
          <div className="mt-auto flex h-[20px] items-center justify-center border border-[#c9c9c9] bg-white"><Caret className="text-[#777]" /></div>
        </div>
        <Svg w={9} h={12} className="mt-[7px] text-[#666]"><path d="M0 5.500L4.500 0 9 5.500zM0 11.500L4.500 6 9 11.500z" fill="currentColor" stroke="none" /></Svg>
        <Svg w={9} h={12} className="mt-[12px] text-[#666]"><path d="M0 0h9L4.500 5.500zM0 6h9l-4.500 5.500z" fill="currentColor" stroke="none" /></Svg>
      </div>
      <ImeBar />
      <div className="absolute left-[484px] top-[732px] z-10 flex h-[67px] w-[69px] items-center justify-center rounded-full bg-[#f8f000] mix-blend-multiply">
        <Svg w={15} h={15} className="text-black"><path d="M7.500 0v15M0 7.500h15" strokeWidth="2.600" /></Svg>
      </div>
    </div>
  );
}

/* ---------- status bar ---------- */

function StatusBar() {
  return (
    <div className="flex h-[31px] items-center border-t border-[#d0d0d0] bg-[#f3f2f3] text-[16.5px] text-[#606060]">
      <div className="ml-[12px] w-[228px] whitespace-nowrap text-[17px] tracking-[0.45px]">幻灯片 第 43 张 , 共 79 张</div>
      <Svg w={21} h={16}><path d="M11 3C8 1 4 1 1 2v12c3-1 7-1 10 1zM11 3c2-2 6-2 8-1M13 6l7 8M20 6l-7 8" /></Svg>
      <div className="ml-[24px] text-[17px]">中文(中国)</div>
      <Svg w={16} h={16} className="ml-auto"><path d="M0 7h16M0 11h16M0 15h11M8 0l3 4H5z" /></Svg>
      <div className="ml-[6px] w-[34px] whitespace-nowrap">备注</div>
      <Svg w={17} h={16} className="ml-[30px]"><path d="M0 0h17v10H10l-2 6-3-6H0z" fill="currentColor" stroke="none" /></Svg>
      <div className="ml-[6px] w-[34px] whitespace-nowrap">批注</div>
      <div className="ml-[26px] flex h-full w-[53px] items-center justify-center bg-[#cccacb]">
        <Svg w={21} h={18}><path d="M1 1h19v16H1zM5 1v16M5 12h15M9 5h7v4H9z" /></Svg>
      </div>
      <Svg w={20} h={18} className="ml-[17px]"><path d="M1 1h7v6H1zM12 1h7v6h-7zM1 11h7v6H1zM12 11h7v6h-7z" /></Svg>
      <Svg w={19} h={18} className="ml-[33px]"><path d="M9.500 3C7 1 3 1 1 2v13c3-1 6-1 8.500 2 2-3 5-3 8.500-2V2c-3-1-6-1-8.500 1zV17M3 5h4M3 8h4M3 11h4M12 5h4M12 8h4M12 11h4" /></Svg>
      <Svg w={19} h={18} className="ml-[34px]"><path d="M0 2h19M2 2v8h15V2M9.500 10v6M5 17h9" /></Svg>
      <div className="ml-[24px] h-[3px] w-[9px] bg-[#666]" />
      <div className="ml-[7px] flex h-[16px] w-[139px] items-center">
        <div className="h-px w-[64px] bg-[#a5a5a5]" />
        <div className="h-[16px] w-[6px] bg-[#666]" />
        <div className="h-px flex-1 bg-[#a5a5a5]" />
      </div>
      <Svg w={12} h={12} className="ml-[5px]"><path d="M6 0v12M0 6h12" strokeWidth="2.800" /></Svg>
      <div className="ml-[20px] w-[38px] whitespace-nowrap text-[17px] tracking-[-0.3px]">98%</div>
      <Svg w={19} h={18} className="ml-[17px] mr-[10px]"><path d="M1 1h17v16H1zM9.500 3v4M9.500 11v4M3 9h4M12 9h4M4 7V4h3M12 4h3v3M4 11v3h3M12 14h3v-3" strokeWidth="1.200" /></Svg>
    </div>
  );
}

/* ---------- taskbar ---------- */

function StartOrb() {
  return (
    <svg viewBox="0 0 54 54" className="relative z-10 -mt-[10px] ml-[11px] h-[54px] w-[54px] shrink-0">
      <defs>
        <radialGradient id="orb" cx="50%" cy="85%" r="80%">
          <stop offset="0" stopColor="#3fc0f0" />
          <stop offset="0.450" stopColor="#1f6296" />
          <stop offset="1" stopColor="#7d93ab" />
        </radialGradient>
      </defs>
      <circle cx="27" cy="27" r="25" fill="url(#orb)" stroke="#32506e" strokeWidth="1.500" />
      <path d="M16 14c5-3 8-1 11 0l-3 11c-4-2-7-2-11 0z" fill="#e8693a" />
      <path d="M29 15c4 2 8 2 12-1l-3 12c-4 2-8 2-12-1z" fill="#9cc84b" />
      <path d="M12 27c4-2 8-2 11 0l-3 11c-3-2-7-2-11 0z" fill="#4da4e0" />
      <path d="M25 28c4 2 8 2 12 0l-3 11c-4 2-8 2-12 0z" fill="#f6cf4d" />
    </svg>
  );
}

function TaskButton({ className, icon, text }) {
  return (
    <div className={"flex h-[40px] items-center gap-[7px] overflow-hidden whitespace-nowrap rounded-[3px] border border-[#8495ad] text-[16.8px] text-[#f1f4f8] " + className}>
      {icon}
      <span>{text}</span>
    </div>
  );
}

function Taskbar() {
  return (
    <div className="flex h-[44px] items-start border-t border-[#45536a] bg-gradient-to-r from-[#0d2140] via-[#12355c] to-[#0d2347] text-white">
      <StartOrb />
      <div className="ml-[39px] flex h-[41px] items-center">
        <Svg w={21} h={21} className="mr-[43px]"><path d="M19 3C9-1 2 6 2 12c0 8 11 9 14 4l1-6h-7" stroke="#d2402a" strokeWidth="5" /></Svg>
        <Svg w={23} h={22} className="mr-[42px]" box="0 0 24 24">
          <circle cx="12" cy="12" r="8" stroke="#f06a3a" strokeWidth="7" strokeDasharray="8.400 42" />
          <circle cx="12" cy="12" r="8" stroke="#5fc04c" strokeWidth="7" strokeDasharray="8.400 42" strokeDashoffset="-8.400" />
          <circle cx="12" cy="12" r="8" stroke="#3fb0e8" strokeWidth="7" strokeDasharray="8.400 42" strokeDashoffset="-16.800" />
          <circle cx="12" cy="12" r="8" stroke="#7a5fd8" strokeWidth="7" strokeDasharray="8.400 42" strokeDashoffset="-25.200" />
          <circle cx="12" cy="12" r="8" stroke="#e8508a" strokeWidth="7" strokeDasharray="8.400 42" strokeDashoffset="-33.600" />
          <circle cx="12" cy="12" r="8" stroke="#f6c63c" strokeWidth="7" strokeDasharray="8.400 42" strokeDashoffset="-42" />
          <circle cx="12" cy="12" r="3.500" fill="#fff" stroke="none" />
        </Svg>
        <Svg w={21} h={21} className="mr-[43px]" box="0 0 24 24">
          <circle cx="12" cy="12" r="8" stroke="#dc4a38" strokeWidth="7" strokeDasharray="17 34" strokeDashoffset="-25" />
          <circle cx="12" cy="12" r="8" stroke="#f3c52f" strokeWidth="7" strokeDasharray="17 34" strokeDashoffset="8" />
          <circle cx="12" cy="12" r="8" stroke="#4ba35a" strokeWidth="7" strokeDasharray="17 34" strokeDashoffset="-8.500" />
          <circle cx="12" cy="12" r="4.500" fill="#4a8be0" stroke="#fff" />
        </Svg>
        <Svg w={21} h={21} className="mr-[43px]" box="0 0 24 24">
          <circle cx="12" cy="12" r="11.500" fill="#e8702c" stroke="none" />
          <circle cx="14" cy="10" r="8" fill="#3d6fb4" stroke="none" />
          <path d="M1 8c2 2 5 0 8 3 2 3 6 2 8 0-1 6-12 7-14 0z" fill="#f0862c" stroke="none" />
        </Svg>
        <Svg w={24} h={22}>
          <path d="M20 15c-3 6-14 6-14-3 0-10 15-9 14 1H8" stroke="#5db4e8" strokeWidth="4" />
          <path d="M3 20C-2 14 14-1 22 2" stroke="#e9c44e" strokeWidth="2" />
        </Svg>
      </div>
      <TaskButton className="ml-[22px] w-[222px] bg-gradient-to-br from-[#5b6f8d] to-[#1f3c65] pl-[12px]" text="01_课件" icon={
        <Svg w={20} h={22} className="mr-[1px]"><path d="M1 4l9-3v20l-9-2z" fill="#f4d67c" stroke="none" /><path d="M9 3h6v5h4v11l-10 2z" fill="#e7be55" stroke="none" /></Svg>} />
      <TaskButton className="ml-[5px] w-[223px] bg-gradient-to-b from-[#98a3b3] to-[#727f94] pl-[13px]" text="尚硅谷_宋红康_01_J..." icon={
        <div className="flex h-[21px] w-[22px] items-center">
          <div className="flex h-[21px] w-[14px] items-center justify-center bg-[#d04a26] text-[13px] font-bold">P</div>
          <div className="h-[17px] w-[8px] border-2 border-l-0 border-[#d04a26] bg-white" />
        </div>} />
      <TaskButton className="ml-[5px] w-[222px] bg-gradient-to-br from-[#5d708f] to-[#1f3b64] pl-[13px]" text="Recording..." icon={
        <Svg w={20} h={20}><path d="M4 1v17" stroke="#1c1c24" strokeWidth="4" /><path d="M2 1h4v5H2z" fill="#d8d8d8" stroke="none" /><circle cx="13" cy="9" r="6" fill="#c02028" stroke="none" /></Svg>} />
      <div className="ml-auto flex h-[41px] items-center whitespace-nowrap pt-[2px] text-[16.8px]">
        <span className="mr-[9px]">api</span>
        <Svg w={22} h={22} className="mr-[8px]">
          <path d="M1 6h10v15H1z" fill="#e8e8e8" stroke="#888" /><path d="M3 10h6M3 13h6M3 16h6" stroke="#555" strokeWidth="1" />
          <path d="M11 6c0-6 9-6 9 0 0 3-4 4-4 7M16 16v4" stroke="#f2e23a" strokeWidth="4" />
        </Svg>
        <span className="w-[74px]">Ajax.chm</span>
        <span className="mb-[18px] ml-[28px] w-[16px] text-[23px] leading-none">»</span>
        <div className="mb-[6px] ml-[11px] flex h-[22px] w-[23px] -rotate-6 items-center justify-center rounded-[3px] bg-[#dd5a35] text-[18px] font-black leading-none">S</div>
        <Svg w={10} h={6} className="ml-[22px]"><path d="M0 6h10L5 0z" fill="#fff" stroke="none" /></Svg>
        <Svg w={17} h={18} className="ml-[22px]"><path d="M0 6h4l5-5v16l-5-5H0z" fill="#fff" stroke="none" /><path d="M12 5c3 2 3 6 0 8" strokeWidth="1.800" /></Svg>
        <Svg w={23} h={22} className="ml-[12px]">
          <circle cx="16" cy="6" r="5" fill="#8cc2ea" stroke="none" /><path d="M10 21c-3-8 12-13 13-4 0 4-8 5-13 4z" fill="#5ea5dc" stroke="none" />
          <circle cx="9" cy="7" r="5" fill="#f5d873" stroke="none" /><path d="M0 13c1-7 13-8 14-1-1 6-12 6-14 1z" fill="#f0c64a" stroke="none" />
        </Svg>
        <Svg w={23} h={22} className="ml-[12px]"><circle cx="11.500" cy="11" r="10" fill="#d8dc22" stroke="#5aa840" strokeWidth="2" /><path d="M11.500 6v10M6.500 11h10" stroke="#2f6f2f" strokeWidth="3" /></Svg>
        <Svg w={21} h={20} className="ml-[12px]"><path d="M6 4h14v11H6zM10 18h8" strokeWidth="2" /><path d="M1 1h6v6H1zM3 7v12h6" stroke="#d5dbe3" /></Svg>
        <Svg w={20} h={21} className="ml-[13px]"><path d="M2 4h9v16H2zM5 1h3" strokeWidth="2.200" /><path d="M12 7h7v5h-7zM13 3v4M18 3v4M15 12v4l-5 3" fill="#fff" /></Svg>
        <Svg w={24} h={21} className="ml-[13px]"><path d="M1 1h22v15H1z" fill="#8ea0bb" stroke="#b5c0d2" /><circle cx="11" cy="8" r="7" fill="#dd3030" stroke="none" /><path d="M6 4l10 9" stroke="#8c1a1a" strokeWidth="2" /><path d="M3 19h18" stroke="#9aa8c0" strokeWidth="2" /></Svg>
        <span className="ml-[25px] w-[84px]">上午 10:11</span>
        <div className="-mt-[2px] ml-[18px] mr-[2px] h-[41px] w-[18px] border border-[#6f7f96] bg-gradient-to-b from-[#3c4d68] to-[#10213f]" />
      </div>
    </div>
  );
}

export default function App() {
  return (
    <div className="flex h-[1080px] w-[2400px] justify-center overflow-hidden bg-black font-['Open_Sans','Noto_Sans_CJK_SC',sans-serif]">
      <div className="flex h-full w-[1920px] flex-col overflow-hidden bg-[#e6e6e6]">
        <div className="relative bg-[#c2502a]">
          <Circuit />
          <TitleBar />
          <TabBar />
        </div>
        <Ribbon />
        <div className="flex h-[791px]">
          <ThumbPane />
          <Editor />
        </div>
        <StatusBar />
        <Taskbar />
      </div>
    </div>
  );
}
